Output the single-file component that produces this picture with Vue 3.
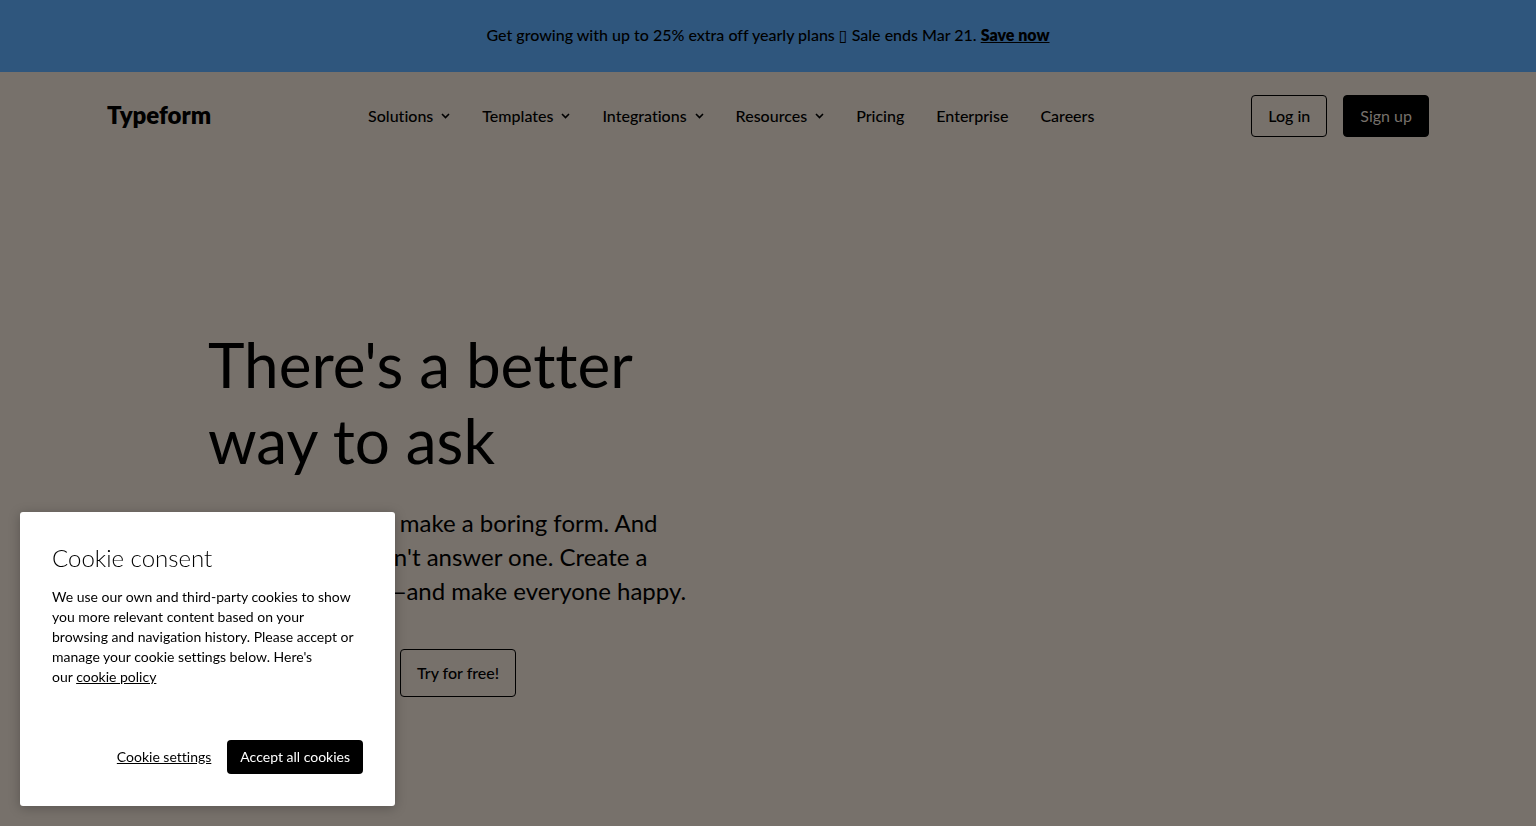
<script setup>
const links = [
  { label: 'Solutions', menu: true },
  { label: 'Templates', menu: true },
  { label: 'Integrations', menu: true },
  { label: 'Resources', menu: true },
  { label: 'Pricing', menu: false },
  { label: 'Enterprise', menu: false },
  { label: 'Careers', menu: false },
]
</script>

<template>
  <div class="page">
    <aside class="banner">
      <p>Get growing with up to 25% extra off yearly plans <span class="mark">▯</span> Sale ends Mar 21. <a href="#">Save now</a></p>
    </aside>

    <header class="header">
      <a class="logo" href="#">Typeform</a>
      <nav class="nav" aria-label="Main">
        <template v-for="link in links" :key="link.label">
          <button v-if="link.menu" type="button" class="nav-item">
            {{ link.label }}
            <svg width="9" height="6" viewBox="0 0 9 6" aria-hidden="true">
              <path d="M1 1l3.5 3.5L8 1" fill="none" stroke="currentColor" stroke-width="1.6" />
            </svg>
          </button>
          <a v-else class="nav-item" href="#">{{ link.label }}</a>
        </template>
      </nav>
      <div class="actions">
        <a class="btn outline" href="#">Log in</a>
        <a class="btn solid" href="#">Sign up</a>
      </div>
    </header>

    <main class="hero">
      <h1>There's a better<br />way to ask</h1>
      <p>You don't want to make a boring form. And<br />your audience won't answer one. Create a<br />typeform instead—and make everyone happy.</p>
      <div class="hero-actions">
        <a class="btn solid tall wide" href="#">See how it works</a>
        <a class="btn outline tall" href="#">Try for free!</a>
      </div>
    </main>

    <section class="cookie" role="dialog" aria-labelledby="cookie-title">
      <h2 id="cookie-title">Cookie consent</h2>
      <p>We use our own and third-party cookies to show<br />you more relevant content based on your<br />browsing and navigation history. Please accept or<br />manage your cookie settings below. Here's<br />our <a href="#">cookie policy</a></p>
      <div class="cookie-actions">
        <button type="button" class="settings">Cookie settings</button>
        <button type="button" class="accept">Accept all cookies</button>
      </div>
    </section>
  </div>
</template>

<style>
body {
  margin: 0;
  background: #77716b;
}
</style>

<style scoped>
.page {
  min-height: 100vh;
  box-sizing: border-box;
  overflow: hidden;
  background: #77716b;
  color: #000;
  font-family: Lato, "Liberation Sans", sans-serif;
  font-size: 16px;
  font-variant-ligatures: none;
}
a {
  color: inherit;
}
button {
  font: inherit;
  font-variant-ligatures: none;
  color: inherit;
  background: none;
  border: 0;
  padding: 0;
}
h1, h2, p {
  margin: 0;
  font-weight: 400;
}
.banner {
  display: flex;
  align-items: center;
  justify-content: center;
  box-sizing: border-box;
  min-height: 72px;
  padding-bottom: 2px;
  background: #2f567d;
  line-height: 24px;
}
.banner p {
  font-weight: 500;
}
.banner a {
  font-weight: 800;
}
.mark {
  font-family: "DejaVu Sans", sans-serif;
  font-weight: 700;
  line-height: 1;
}
.header {
  display: flex;
  align-items: center;
  justify-content: space-between;
  min-height: 88px;
  padding: 0 107px;
}
.logo {
  padding-bottom: 4px;
  font-size: 24px;
  font-weight: 800;
  text-decoration: none;
}
.nav {
  display: flex;
  gap: 32px;
  font-weight: 500;
}
.nav-item {
  display: flex;
  align-items: center;
  gap: 8px;
  line-height: 24px;
  white-space: nowrap;
  text-decoration: none;
}
.actions, .hero-actions {
  display: flex;
  gap: 16px;
}
.btn {
  display: flex;
  align-items: center;
  justify-content: center;
  box-sizing: border-box;
  min-height: 42px;
  padding: 0 16px 2px;
  border: 1px solid #000;
  border-radius: 4px;
  font-weight: 500;
  white-space: nowrap;
  text-decoration: none;
}
.solid {
  background: #000;
  color: #77716b;
  font-weight: 400;
}
.tall {
  min-height: 48px;
}
.wide {
  min-width: 176px;
}
.hero {
  padding: 166px 208px 0;
}
.hero h1 {
  font-size: 62px;
  line-height: 76px;
}
.hero p {
  margin: 28px 0 41px;
  font-size: 24px;
  line-height: 34px;
}
.cookie {
  position: fixed;
  left: 20px;
  bottom: 20px;
  box-sizing: border-box;
  width: 375px;
  padding: 30px 32px 32px;
  border-radius: 3px;
  background: #fff;
  box-shadow: 0 2px 12px rgba(0, 0, 0, 0.25);
}
.cookie h2 {
  font-size: 24px;
  font-weight: 300;
  line-height: 32px;
}
.cookie p {
  margin: 13px 0 53px;
  font-size: 14px;
  line-height: 20px;
  white-space: nowrap;
}
.cookie-actions {
  display: flex;
  align-items: center;
  justify-content: flex-end;
  gap: 16px;
  font-size: 14px;
}
.settings {
  padding-bottom: 2px;
  text-decoration: underline;
}
.accept {
  min-height: 34px;
  padding: 0 13px 2px;
  border-radius: 4px;
  background: #000;
  color: #fff;
}
</style>
